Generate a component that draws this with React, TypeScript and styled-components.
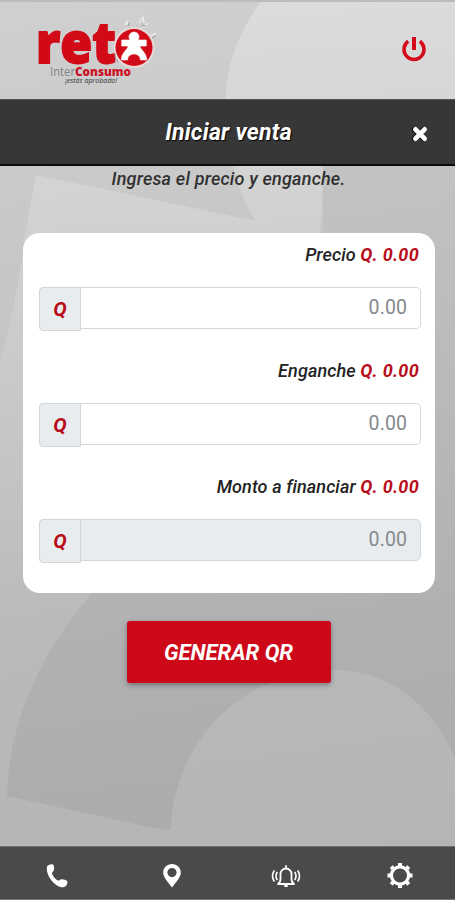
import React from "react";
import styled, { createGlobalStyle } from "styled-components";

const GlobalStyle = createGlobalStyle`
  * { box-sizing: border-box; }
  body { margin: 0; font-family: Roboto, "Liberation Sans", sans-serif; }
`;

const Screen = styled.div`
  position: relative;
  isolation: isolate;
  display: flex;
  flex-direction: column;
  width: 455px;
  height: 900px;
  overflow: hidden;
  border-top: 2px solid #bcbcbc;
  background: linear-gradient(172deg, #d0d0d0 0%, #cacaca 18%, #c2c2c2 43%, #b9b9b9 70%, #b4b4b4 100%);
`;

const Backdrop = styled.svg`
  position: absolute;
  inset: -2px 0 0;
  z-index: -1;
`;

const Header = styled.header`
  display: flex;
  justify-content: space-between;
  align-items: flex-start;
  height: 97px;
  padding: 10px 28px 0 32px;
`;

const LogoArt = styled.svg`
  overflow: visible;
`;

const IconButton = styled.button`
  display: flex;
  align-items: center;
  justify-content: center;
  padding: 0;
  border: 0;
  background: none;
  color: inherit;
`;

const PowerButton = styled(IconButton)`
  margin-top: 22px;
  color: #d40b1b;
`;

const TitleBar = styled.div`
  display: grid;
  grid-template-columns: 60px 1fr 60px;
  align-items: center;
  height: 67px;
  border-top: 1px solid #555;
  border-bottom: 2px solid #0b0b0b;
  background: #373737;
  color: #fff;
`;

const Title = styled.h1`
  grid-column: 2;
  margin: 0;
  padding-left: 2px;
  text-align: center;
  font-size: 23px;
  font-weight: 700;
  font-style: italic;
  letter-spacing: 0.25px;
  text-shadow: 1px 1px 1px #000;
`;

const CloseButton = styled(IconButton)`
  padding: 3px 10px 0 0;
  filter: drop-shadow(-1px 0 0.5px #000);
`;

const Content = styled.main`
  flex: 1;
  display: flex;
  flex-direction: column;
  align-items: center;
`;

const Hint = styled.p`
  height: 26px;
  margin: 0 0 41px;
  padding-left: 2px;
  font-size: 18px;
  font-weight: 500;
  font-style: italic;
  line-height: 26px;
  letter-spacing: 0.2px;
  color: #303030;
  white-space: nowrap;
`;

const Card = styled.section`
  display: flex;
  flex-direction: column;
  width: 412px;
  height: 360px;
  margin-left: 3px;
  padding: 10px 14px 0 16px;
  border-radius: 17px;
  background: #fff;
`;

const Field = styled.div`
  height: 116px;
`;

const FieldLabel = styled.div`
  height: 24px;
  margin-bottom: 20px;
  padding-right: 2px;
  text-align: right;
  font-size: 18px;
  font-weight: 500;
  font-style: italic;
  line-height: 24px;
  letter-spacing: 0.1px;
  color: #222;
`;

const Amount = styled.strong`
  font-weight: 700;
  letter-spacing: 0.3px;
  color: #b90c1a;
`;

const InputGroup = styled.div`
  display: flex;
  align-items: flex-start;
`;

const Prefix = styled.span`
  display: flex;
  align-items: center;
  justify-content: center;
  width: 42px;
  height: 44px;
  border: 1px solid #d0d6da;
  border-radius: 4px 0 0 4px;
  background: #e9ecef;
  color: #b90c1a;
  font-size: 20px;
  font-weight: 700;
  font-style: italic;
`;

const NumberInput = styled.input`
  flex: 1;
  min-width: 0;
  height: 42px;
  padding: 0 13px 2px;
  border: 1px solid #d4d8dc;
  border-left: 0;
  border-radius: 0 5px 5px 0;
  background: #fff;
  font: 400 19.5px Roboto, sans-serif;
  letter-spacing: 0.1px;
  text-align: right;

  &::placeholder { color: #85898d; opacity: 1; }
  &:disabled { background: #e9ecef; }
`;

const PrimaryButton = styled.button`
  width: 204px;
  height: 62px;
  margin: 28px 0 0 2px;
  padding: 0;
  border: 0;
  border-radius: 3px;
  background: #cd0919;
  box-shadow: 0 2px 5px rgba(0, 0, 0, 0.35);
  color: #fff;
  font: italic 700 22px Roboto, sans-serif;
`;

const BottomNav = styled.nav`
  display: grid;
  grid-template-columns: repeat(4, 114.4px);
  height: 54px;
  border-top: 1px solid #6f6f6f;
  border-bottom: 1px solid #777;
  background: #4a4a4a;
  color: #fff;
`;

const NavButton = styled(IconButton)`
  padding-top: 5px;
`;

const Logo = () => (
  <LogoArt width="130" height="80" viewBox="32 12 130 80" aria-label="reto InterConsumo">
    <text x="36" y="62.500" textLength="80" lengthAdjust="spacingAndGlyphs" fontFamily="Open Sans" fontWeight="800" fontSize="57" fill="#d20a18" stroke="#d20a18" strokeWidth="1.8">ret</text>
    <circle cx="134" cy="47.5" r="20.500" fill="#e8d9d9" />
    <circle cx="134" cy="47.5" r="18.5" fill="#d20a18" />
    <path d="M134 32a5 5 0 0 1 4.100 8h8.200v6h-6.400c.2 3.800 6.800 6.400 6.800 14h-6.300c0-4-3.300-6-6.400-6s-6.400 2-6.400 6h-6.300c0-7.600 6.600-10.200 6.800-14h-6.400v-6h8.200A5 5 0 0 1 134 32Z" fill="#fff" stroke="#fff" strokeWidth=".6" />
    <path d="M125 25l2-4 1 4M139 23l4-6 1 6M144 27l4-4M151 36l5-3" fill="none" stroke="#eee" strokeWidth="1.2" />
    <path d="M128 26l1-3M142 25l4 1M152 38l4-2M115 54q-1 4 3 8" fill="none" stroke="#8d8d8d" strokeWidth=".8" />
    <text x="50" y="76" textLength="25" lengthAdjust="spacingAndGlyphs" fontFamily="Open Sans" fontSize="12.5" fill="#858585">Inter</text>
    <text x="75" y="76" textLength="56" lengthAdjust="spacingAndGlyphs" fontFamily="Open Sans" fontWeight="800" fontSize="12.5" fill="#cc1025">Consumo</text>
    <text x="65" y="83" textLength="52" lengthAdjust="spacingAndGlyphs" fontFamily="Open Sans" fontWeight="400" fontStyle="italic" fontSize="6.8" fill="#333">¡estás aprobado!</text>
  </LogoArt>
);

const PowerIcon = () => (
  <svg width="26" height="28" viewBox="0 0 26 28" fill="none" stroke="currentColor">
    <path d="M13 3v13" strokeWidth="4" />
    <path d="M7.200 7.300a10 10 0 1 0 11.600 0" strokeWidth="3.500" />
  </svg>
);

const CloseIcon = () => (
  <svg width="18" height="18" viewBox="0 0 18 18" stroke="currentColor" strokeWidth="4.8" strokeLinecap="round">
    <path d="M4.4 4.4l9.200 9.200M13.6 4.4l-9.200 9.200" />
  </svg>
);

const PhoneIcon = () => (
  <svg width="26" height="28" viewBox="0 0 26 28" fill="currentColor">
    <path d="M3.1 4.500C4 2.200 8.700 1.300 9.600 3.200c.8 1.800.7 4.700-.2 6.100-.5.800-1.400 1-1.400 1.700 0 2.400 3.800 6.900 6.500 7.600.9.2 1.400-1.200 2.700-1.400 1.800-.2 4.900.500 5.900 1.900 1 1.600-.5 5.400-3.100 6C13 27 1 14 3.100 4.500Z" />
  </svg>
);

const PinIcon = () => (
  <svg width="20" height="26" viewBox="0 0 20 26" fill="currentColor" fillRule="evenodd">
    <path d="M10 1c-5 0-8.800 3.600-8.800 8.400C1.200 14.500 6.500 19.500 10 24.500c3.500-5 8.800-10 8.800-15.100C18.800 4.600 15 1 10 1Zm0 4a4.600 4.600 0 1 1 0 9.200A4.600 4.600 0 0 1 10 5Z" />
  </svg>
);

const BellIcon = () => (
  <svg width="30" height="26" viewBox="0 0 30 26" fill="none" stroke="currentColor" strokeWidth="1.8" strokeLinecap="round" strokeLinejoin="round">
    <path d="M15 3v1M7 21h16c-1.500-1-2.500-2.500-2.500-5v-5a5.500 5.500 0 0 0-11 0v5c0 2.500-1 4-2.500 5ZM14 23h2" />
    <path d="M6 9.500q-2 3.500 0 7M24 9.500q2 3.500 0 7M3 8q-3 5 0 10M27 8q3 5 0 10" strokeWidth="1.600" />
  </svg>
);

const GearIcon = () => (
  <svg width="28" height="28" viewBox="0 0 28 28" fill="none" stroke="currentColor">
    <circle cx="14" cy="13.500" r="8.600" strokeWidth="3.200" />
    <path d="M14 1v4M14 22v4M1.500 13.500h4M22.500 13.500h4M5.200 4.700l2.600 2.600M20.200 19.700l2.600 2.600M22.800 4.700l-2.600 2.600M7.800 19.700l-2.600 2.600" strokeWidth="4" />
  </svg>
);

const BackdropArt = () => (
  <Backdrop width="455" height="900" viewBox="0 0 455 900">
    <defs>
      <linearGradient id="edge" x1="0" y1="0" x2="0" y2="1">
        <stop offset="0" stopColor="#fff" stopOpacity=".27" />
        <stop offset="1" stopColor="#fff" stopOpacity="0" />
      </linearGradient>
      <linearGradient id="shade" x1="0" y1="0" x2="0" y2="1">
        <stop offset="0" stopColor="#000" stopOpacity=".03" />
        <stop offset="1" stopColor="#000" stopOpacity=".055" />
      </linearGradient>
    </defs>
    <path d="M262 0C236 36 225 68 226 105C227 150 237 194 256 221L36 175L25 235Q17 300 0 362V620H320V232Q325 180 322 100H455V0Z" fill="url(#edge)" />
    <path d="M93 592C42 650 9 720 7 796L158 829L171 830C173 746 238 671 333 670C393 670 435 710 455 758V166H323V592Z" fill="url(#shade)" />
  </Backdrop>
);

const fields = [
  { label: "Precio", disabled: false },
  { label: "Enganche", disabled: false },
  { label: "Monto a financiar", disabled: true },
];

const navItems = [
  { label: "Teléfono", Icon: PhoneIcon },
  { label: "Ubicación", Icon: PinIcon },
  { label: "Notificaciones", Icon: BellIcon },
  { label: "Ajustes", Icon: GearIcon },
];

export default function App() {
  return (
    <>
      <GlobalStyle />
      <Screen>
        <BackdropArt />
        <Header>
          <Logo />
          <PowerButton aria-label="Salir"><PowerIcon /></PowerButton>
        </Header>
        <TitleBar>
          <Title>Iniciar venta</Title>
          <CloseButton aria-label="Cerrar"><CloseIcon /></CloseButton>
        </TitleBar>
        <Content>
          <Hint>Ingresa el precio y enganche.</Hint>
          <Card>
            {fields.map(({ label, disabled }) => (
              <Field key={label}>
                <FieldLabel>{label} <Amount>Q. 0.00</Amount></FieldLabel>
                <InputGroup>
                  <Prefix>Q</Prefix>
                  <NumberInput placeholder="0.00" aria-label={label} disabled={disabled} />
                </InputGroup>
              </Field>
            ))}
          </Card>
          <PrimaryButton>GENERAR QR</PrimaryButton>
        </Content>
        <BottomNav>
          {navItems.map(({ label, Icon }) => (
            <NavButton key={label} aria-label={label}><Icon /></NavButton>
          ))}
        </BottomNav>
      </Screen>
    </>
  );
}
